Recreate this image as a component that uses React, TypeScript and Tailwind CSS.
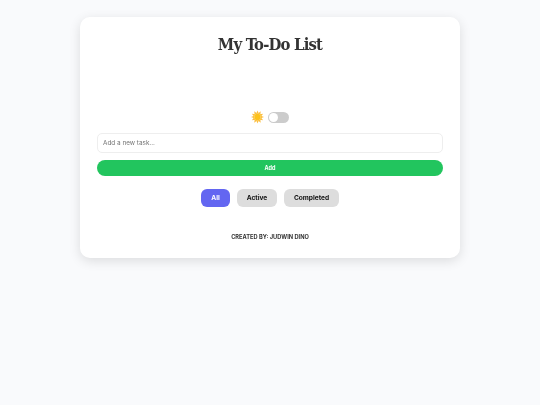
import { useState } from "react";

function SunIcon() {
  const rays = [0, 30, 60, 90, 120, 150, 180, 210, 240, 270, 300, 330];
  return (
    <svg width="13" height="14" viewBox="0 0 24 24" aria-hidden="true" preserveAspectRatio="xMidYMid meet">
      {rays.map((deg) => (
        <path key={deg} d="M12 0 L14.5 6 L9.5 6 Z" fill="#fbbd3c" transform={`rotate(${deg} 12 12)`} />
      ))}
      <circle cx="12" cy="12" r="6" fill="#fcc21b" />
    </svg>
  );
}

const filters = [
  { name: "All", width: "w-[29px]" },
  { name: "Active", width: "w-[40px]" },
  { name: "Completed", width: "w-[55px]" },
];

export default function App() {
  const [filter, setFilter] = useState("All");

  return (
    <div className="min-h-[405px] bg-[#f9fafc] pt-[17px] font-['Inter','Liberation_Sans',sans-serif]">
      <div className="mx-auto flex h-[241px] w-[380px] flex-col items-center rounded-[10px] bg-white px-[17px] shadow-[0_3px_12px_rgba(0,0,0,0.12)] will-change-transform">
        <h1 className="mt-[17px] h-[22px] font-['DejaVu_Serif',serif] text-[16.5px] leading-[22px] font-bold tracking-[-0.8px] text-[#333333] [font-stretch:condensed]">
          My To-Do List
        </h1>

        <div className="mt-[54px] flex h-[14px] items-center gap-[4px]">
          <SunIcon />
          <div className="flex h-[11px] w-[21px] items-center rounded-full bg-[#cccccc] pl-[1px]">
            <div className="h-[9px] w-[9px] rounded-full bg-white" />
          </div>
        </div>

        <input
          type="text"
          placeholder="Add a new task..."
          className="mt-[9px] h-[20px] w-full rounded-[5px] border border-[#eeeeee] bg-white px-[5px] text-[6.4px] text-[#333333] outline-none placeholder:text-[#757575]"
        />

        <button className="mt-[7px] h-[16px] w-full rounded-[8px] bg-[#22c55e] text-[5.5px] font-bold text-white">
          Add
        </button>

        <div className="mt-[13px] flex gap-[7px]">
          {filters.map((item) => (
            <button
              key={item.name}
              onClick={() => setFilter(item.name)}
              className={
                filter === item.name
                  ? `h-[18px] ${item.width} rounded-[6px] bg-[#6366f1] pt-px text-[6.6px] font-bold text-white`
                  : `h-[18px] ${item.width} rounded-[6px] bg-[#dddddd] pt-px text-[6.6px] font-bold text-[#111111]`
              }
            >
              {item.name}
            </button>
          ))}
        </div>

        <p className="mt-[25px] text-[5.7px] leading-[10px] font-bold text-[#333333]">
          CREATED BY: JUDWIN DINO
        </p>
      </div>
    </div>
  );
}
